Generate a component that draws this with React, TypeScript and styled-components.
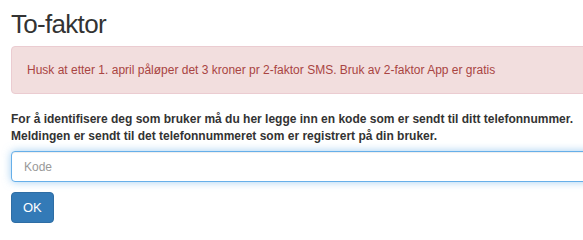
import React from "react";
import styled, { createGlobalStyle } from "styled-components";

const Global = createGlobalStyle`
  html, body { margin: 0; padding: 0; background: #fff; overflow: hidden; }
  body { font-family: "Liberation Sans", Arial, Helvetica, sans-serif; color: #333; }
  * { box-sizing: border-box; }
`;

const Page = styled.div`
  width: 640px;
  padding: 0 0 0 11px;
`;

const Title = styled.h2`
  margin: 9px 0 7px;
  font-size: 26px;
  line-height: 30px;
  letter-spacing: -0.7px;
  font-weight: 400;
  color: #333;
`;

const Alert = styled.div`
  padding: 15px 15px;
  border: 1px solid #ebccd1;
  border-radius: 4px;
  background: #f2dede;
  color: #a94442;
  font-size: 12px;
  line-height: 16px;
  margin-bottom: 17px;
`;

const Lead = styled.p`
  margin: 0 0 6px;
  font-size: 12px;
  font-weight: 700;
  line-height: 17px;
  color: #333;
`;

const Input = styled.input`
  display: block;
  width: 100%;
  height: 31px;
  padding: 6px 12px;
  font-family: inherit;
  font-size: 12px;
  color: #555;
  border: 1px solid #66afe9;
  border-radius: 4px;
  outline: 0;
  box-shadow: inset 0 1px 1px rgba(0,0,0,.075), 0 0 8px rgba(102,175,233,.6);
  margin-bottom: 10px;
  &::placeholder { color: #999; }
`;

const Button = styled.button`
  display: inline-block;
  height: 31px;
  padding: 0 11px;
  font-family: inherit;
  font-size: 13px;
  color: #fff;
  background: #337ab7;
  border: 1px solid #2e6da4;
  border-radius: 4px;
`;

export default function App() {
  return (
    <>
      <Global />
      <Page>
        <Title>To-faktor</Title>
        <Alert>Husk at etter 1. april påløper det 3 kroner pr 2-faktor SMS. Bruk av 2-faktor App er gratis</Alert>
        <Lead>
          For å identifisere deg som bruker må du her legge inn en kode som er sendt til ditt telefonnummer.
          <br />
          Meldingen er sendt til det telefonnummeret som er registrert på din bruker.
        </Lead>
        <Input placeholder="Kode" />
        <Button>OK</Button>
      </Page>
    </>
  );
}
